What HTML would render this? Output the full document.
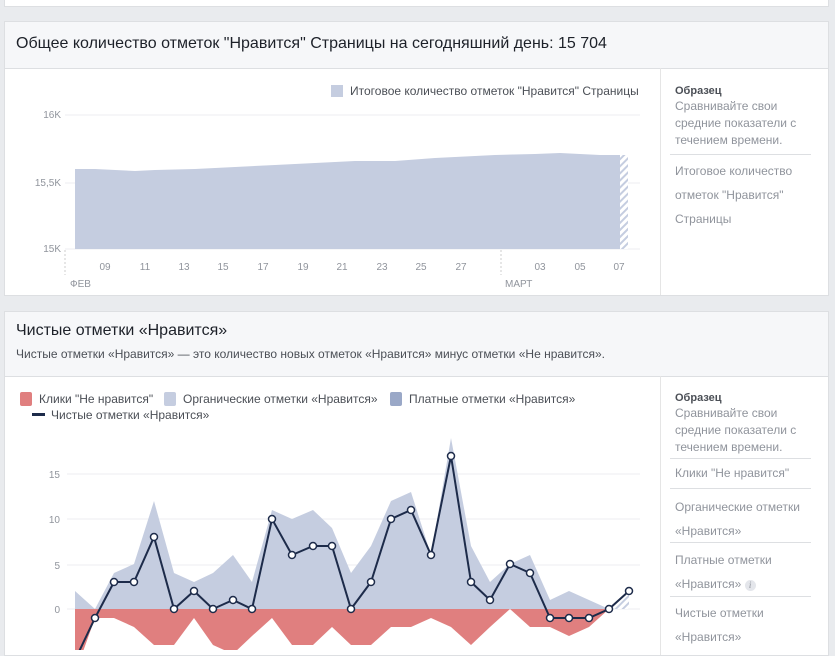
<!DOCTYPE html>
<html><head><meta charset="utf-8"><style>
body{margin:0;width:835px;height:650px;overflow:hidden;background:#e9ebee;font-family:"Liberation Sans",Arial,sans-serif;position:relative}
.card{position:absolute;left:4px;width:825px;background:#fff;border:1px solid #dddfe2;box-sizing:border-box}
.hd{position:absolute;left:0;right:0;top:0;background:#f6f7f9;border-bottom:1px solid #dddfe2}
.side{position:absolute;left:655px;top:0;bottom:0;border-left:1px solid #e5e5e5}
.t{position:absolute;white-space:nowrap}
.g{color:#90949c;font-size:12px}
.sep{position:absolute;left:670px;width:141px;border-top:1px solid #dddfe2}
svg{position:absolute;left:0;top:0}
</style></head><body>
<div class="card" style="top:-2px;height:9px"></div>
<div class="card" style="top:21px;height:275px"><div class="hd" style="height:46px"></div><div class="side" style="top:46px"></div></div>
<div class="card" style="top:311px;height:345px"><div class="hd" style="height:64px"></div><div class="side" style="top:64px"></div></div>

<div class="t" style="left:16px;top:35px;font-size:16px;color:#1d2129">Общее количество отметок "Нравится" Страницы на сегодняшний день: 15 704</div>
<div class="t" style="left:16px;top:322px;font-size:16px;color:#1d2129">Чистые отметки «Нравится»</div>
<div class="t" style="left:16px;top:347px;font-size:12px;color:#4b4f56">Чистые отметки «Нравится» — это количество новых отметок «Нравится» минус отметки «Не нравится».</div>

<div class="t" style="left:675px;top:85px;font-size:11px;font-weight:bold;color:#4b4f56">Образец</div>
<div class="t g" style="left:675px;top:98px;line-height:17px">Сравнивайте свои<br>средние показатели с<br>течением времени.</div>
<div class="sep" style="top:154px"></div>
<div class="t g" style="left:675px;top:159px;line-height:24px">Итоговое количество<br>отметок "Нравится"<br>Страницы</div>

<div class="t" style="left:675px;top:392px;font-size:11px;font-weight:bold;color:#4b4f56">Образец</div>
<div class="t g" style="left:675px;top:405px;line-height:17px">Сравнивайте свои<br>средние показатели с<br>течением времени.</div>
<div class="sep" style="top:458px"></div>
<div class="t g" style="left:675px;top:466px">Клики "Не нравится"</div>
<div class="sep" style="top:488px"></div>
<div class="t g" style="left:675px;top:495px;line-height:24px">Органические отметки<br>«Нравится»</div>
<div class="sep" style="top:542px"></div>
<div class="t g" style="left:675px;top:548px;line-height:24px">Платные отметки<br>«Нравится» <span style="display:inline-block;width:11px;height:11px;border-radius:50%;background:#e4e6eb;color:#90949c;font-size:9px;text-align:center;line-height:11px;font-style:italic;font-family:'Liberation Serif',serif">i</span></div>
<div class="sep" style="top:596px"></div>
<div class="t g" style="left:675px;top:601px;line-height:24px">Чистые отметки<br>«Нравится»</div>

<svg width="835" height="650" font-family="Liberation Sans, Arial, sans-serif">
<defs><pattern id="h" width="5" height="5" patternUnits="userSpaceOnUse" patternTransform="rotate(45)"><rect width="5" height="5" fill="#fff"/><rect width="2" height="5" fill="#c5cde0"/></pattern></defs>
<rect x="331" y="85" width="12" height="12" fill="#c5cde0"/>
<text x="350" y="95" font-size="12" fill="#4b4f56">Итоговое количество отметок "Нравится" Страницы</text>
<g stroke="#eceef1"><line x1="65" y1="115" x2="640" y2="115"/><line x1="65" y1="183" x2="640" y2="183"/><line x1="65" y1="249" x2="640" y2="249"/></g>
<g font-size="10" fill="#90949c" text-anchor="end"><text x="61" y="118">16K</text><text x="61" y="186">15,5K</text><text x="61" y="252">15K</text></g>
<path d="M75,169 L95,169 L135,171 L155,170 L195,169 L235,167 L275,165 L315,163 L355,161 L395,161 L435,158 L455,157 L475,156 L495,155 L535,154 L560,153 L600,155 L620,155 L620,249 L75,249Z" fill="#c5cde0"/>
<path d="M620,155 L628,155 L628,249 L620,249Z" fill="url(#h)"/>
<g stroke="#ccc" stroke-dasharray="2,2"><line x1="65" y1="250" x2="65" y2="275"/><line x1="501" y1="250" x2="501" y2="275"/></g>
<g font-size="10" fill="#90949c" text-anchor="middle"><text x="105" y="270">09</text><text x="145" y="270">11</text><text x="184" y="270">13</text><text x="223" y="270">15</text><text x="263" y="270">17</text><text x="303" y="270">19</text><text x="342" y="270">21</text><text x="382" y="270">23</text><text x="421" y="270">25</text><text x="461" y="270">27</text><text x="540" y="270">03</text><text x="580" y="270">05</text><text x="619" y="270">07</text></g>
<g font-size="10" fill="#90949c"><text x="70" y="287">ФЕВ</text><text x="505" y="287">МАРТ</text></g>
<rect x="20" y="392" width="12" height="14" rx="2" fill="#e07f7f"/>
<text x="39" y="403" font-size="12" fill="#4b4f56">Клики "Не нравится"</text>
<rect x="164" y="392" width="12" height="14" rx="2" fill="#c5cde0"/>
<text x="183" y="403" font-size="12" fill="#4b4f56">Органические отметки «Нравится»</text>
<rect x="390" y="392" width="12" height="14" rx="2" fill="#9aa8c7"/>
<text x="409" y="403" font-size="12" fill="#4b4f56">Платные отметки «Нравится»</text>
<rect x="32" y="413" width="13" height="3" fill="#1d2b4a"/>
<text x="51" y="419" font-size="12" fill="#4b4f56">Чистые отметки «Нравится»</text>
<g stroke="#eceef1"><line x1="67" y1="474" x2="640" y2="474"/><line x1="67" y1="519" x2="640" y2="519"/><line x1="67" y1="565" x2="640" y2="565"/><line x1="67" y1="609" x2="640" y2="609"/></g>
<g font-size="10" fill="#90949c" text-anchor="end"><text x="60" y="478">15</text><text x="60" y="523">10</text><text x="60" y="569">5</text><text x="60" y="613">0</text></g>
<path d="M75,591 L95,609 L114,573 L134,564 L154,501 L174,573 L194,582 L213,573 L233,555 L252,582 L272,510 L292,519 L313,510 L332,528 L351,573 L371,546 L391,501 L411,492 L431,555 L451,438 L471,546 L490,582 L510,564 L530,555 L550,600 L569,591 L589,600 L609,609 L609,609 L75,609Z" fill="#c5cde0"/>
<path d="M75,609 L95,609 L114,609 L134,609 L609,609 L629,591 L629,609Z" fill="url(#h)"/>
<path d="M75,609 L609,609 L589,627 L569,636 L550,627 L530,627 L510,609 L490,627 L471,645 L451,627 L431,618 L411,627 L391,627 L371,645 L351,645 L332,627 L313,645 L292,645 L272,618 L252,636 L233,654 L213,645 L194,618 L174,645 L154,645 L134,627 L114,618 L95,618 L80,660 L75,660Z" fill="#e07f7f"/>
<polyline fill="none" stroke="#1d2b4a" stroke-width="2" points="75,660 95,618 114,582 134,582 154,537 174,609 194,591 213,609 233,600 252,609 272,519 292,555 313,546 332,546 351,609 371,582 391,519 411,510 431,555 451,456 471,582 490,600 510,564 530,573 550,618 569,618 589,618 609,609 629,591"/>
<g fill="#fff" stroke="#1d2b4a" stroke-width="1.5">
<circle cx="95" cy="618" r="3.5"/><circle cx="114" cy="582" r="3.5"/><circle cx="134" cy="582" r="3.5"/><circle cx="154" cy="537" r="3.5"/><circle cx="174" cy="609" r="3.5"/><circle cx="194" cy="591" r="3.5"/><circle cx="213" cy="609" r="3.5"/><circle cx="233" cy="600" r="3.5"/><circle cx="252" cy="609" r="3.5"/><circle cx="272" cy="519" r="3.5"/><circle cx="292" cy="555" r="3.5"/><circle cx="313" cy="546" r="3.5"/><circle cx="332" cy="546" r="3.5"/><circle cx="351" cy="609" r="3.5"/><circle cx="371" cy="582" r="3.5"/><circle cx="391" cy="519" r="3.5"/><circle cx="411" cy="510" r="3.5"/><circle cx="431" cy="555" r="3.5"/><circle cx="451" cy="456" r="3.5"/><circle cx="471" cy="582" r="3.5"/><circle cx="490" cy="600" r="3.5"/><circle cx="510" cy="564" r="3.5"/><circle cx="530" cy="573" r="3.5"/><circle cx="550" cy="618" r="3.5"/><circle cx="569" cy="618" r="3.5"/><circle cx="589" cy="618" r="3.5"/><circle cx="609" cy="609" r="3.5"/><circle cx="629" cy="591" r="3.5"/>
</g>
</svg>
</body></html>
